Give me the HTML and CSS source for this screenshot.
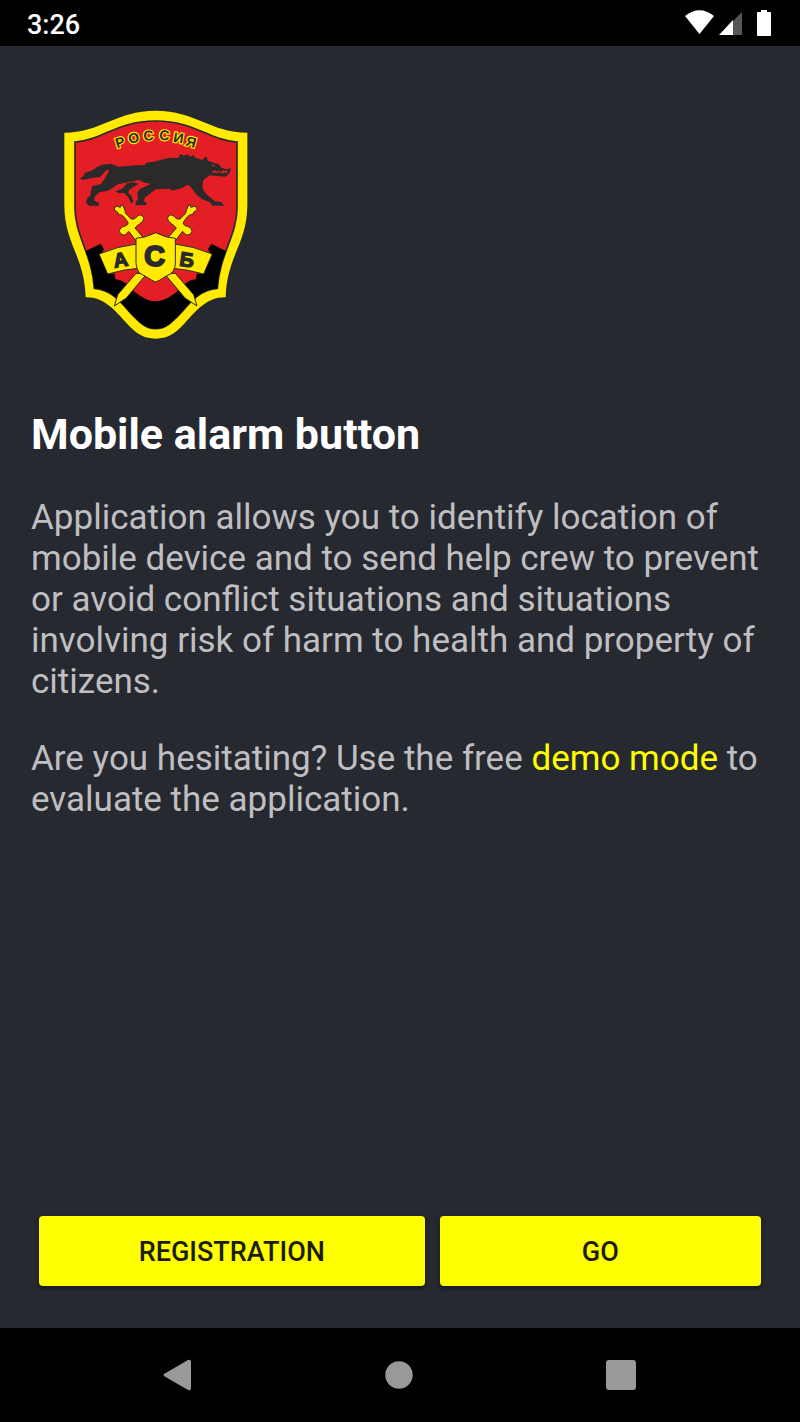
FILE: index.html
```
<!DOCTYPE html>
<html lang="en">
<head>
<meta charset="utf-8">
<meta name="viewport" content="width=device-width, initial-scale=1">
<title>Mobile alarm button</title>
<link rel="stylesheet" href="styles.css">
</head>
<body>
<div class="screen">
  <header class="status">
    <time class="clock">3:26</time>
    <svg class="status-icons" viewBox="0 0 90 32" aria-hidden="true">
      <path fill="#fff" d="M1 9Q15.500-2.500 30 9L15.500 27Z"/>
      <path fill="#55565a" d="M49 14L58 5V28H49Z"/>
      <path fill="#fff" d="M49 13V28H35Z"/>
      <path fill="#fff" d="M77 5V3h6V5h3q1 0 1 1V28q0 1-1 1H74q-1 0-1-1V6q0-1 1-1Z"/>
    </svg>
  </header>

  <main class="content">
    <svg class="emblem" viewBox="0 0 630 735" role="img" aria-label="АСБ Россия">
      <defs>
        <clipPath id="field"><path d="M75 126C160 120 200 63 317 63C434 63 475 120 561 126V325C561 405 508 465 502 565C455 568 425 600 396 635C365 668 347 686 317 686C287 686 269 668 238 635C209 600 179 568 133 565C127 465 75 405 75 325Z"/></clipPath>
        <path id="hilt" d="M192 328L198 318L211 322L217 312L225 331C224 341 233 346 244 357C259 360 261 343 273 345C290 354 277 367 263 376L255 384L292 427L273 443L238 396C232 390 233 406 220 405C201 399 208 382 222 379C235 376 237 369 230 361C222 351 216 341 205 344C205 334 200 336 192 328Z"/>
        <path id="blade" d="M258 520L203 584L193 618L229 594L290 522Z"/>
      </defs>
      <path fill="#ffea00" d="M43 98C150 98 200 32 317 32C434 32 484 98 592 98V315C592 430 530 470 527 592C473 590 440 630 404 670C375 703 350 716 317 716C284 716 259 703 230 670C194 630 161 590 107 592C104 470 43 430 43 315Z"/>
      <path fill="#e31e24" stroke="#2b2a29" stroke-width="5" d="M75 126C160 120 200 63 317 63C434 63 475 120 561 126V325C561 405 508 465 502 565C455 568 425 600 396 635C365 668 347 686 317 686C287 686 269 668 238 635C209 600 179 568 133 565C127 465 75 405 75 325Z"/>
      <path clip-path="url(#field)" d="M100 457L152 431L162 448L151 466L178 521H194L196 538C225 540 235 560 255 576C300 612 332 614 379 576C399 560 408 540 438 538L440 521H457L484 466L474 448L484 431L535 457V735H100Z"/>
      <text class="motto" x="201 238 281 327 368 405" y="145 131 122 119 125 136" rotate="-17 -11 -4 4 10 16">РОССИЯ</text>
      <path class="wolf" d="M89 235L104 226L102 220L129 210C142 200 154 190 184 192L206 200L260 196L283 195L290 188L318 184L342 177L360 173L385 174L391 161L402 167L412 163L422 170L429 165L438 174L456 180L469 169L474 182L486 187L507 193L513 203L531 208L543 204L541 213L536 221L530 228L525 230L493 227L479 226L461 240C452 262 462 280 480 291L493 303L515 307L522 317H487L480 307L457 298L441 286L420 258L411 255L397 264L365 272L361 266L339 267L317 268L299 282L286 291L281 303L290 309L288 316H257V306L264 298L261 279L270 267L303 251L283 248L267 240L240 245L204 253L174 272L148 277L135 289L132 301L147 309V317H116L108 307L112 294L120 287L126 259L153 252L165 235L178 211L169 210L151 231L125 234L100 240Z"/>
      <path class="wolf" d="M195 275L218 265L231 250L250 246L266 252L249 262L237 270L235 280L244 287L250 303L247 309L241 307L235 291L221 278L210 280Z"/>
      <path fill="#e31e24" d="M487 193l10 4-10 2ZM486 215L496 211L500 216L508 212L514 216L520 211L526 213L531 210L531 219L522 217L517 221L510 216L502 220L496 217L487 220Z"/>
      <g class="gold">
        <use href="#hilt"/><use href="#hilt" transform="matrix(-1 0 0 1 634 0)"/>
        <use href="#blade"/><use href="#blade" transform="matrix(-1 0 0 1 634 0)"/>
        <path d="M147 462Q205 438 260 432L272 504Q222 508 173 522Z"/>
        <path d="M487 462Q429 438 374 432L362 504Q412 508 461 522Z"/>
        <path d="M258 415Q285 414 317 398Q349 414 376 415V479C378 503 369 519 357 524C344 529 334 540 317 546C300 540 290 529 277 524C265 519 257 503 258 479Z"/>
      </g>
      <text class="letter" x="212" y="500" text-anchor="middle" transform="rotate(-9 212 480)">А</text>
      <text class="letter letter-main" x="314" y="497" text-anchor="middle">С</text>
      <text class="letter" x="411" y="500" text-anchor="middle" transform="rotate(9 411 480)">Б</text>
    </svg>

    <h1 class="title">Mobile alarm button</h1>
    <p class="copy">Application allows you to identify location of mobile device and to send help crew to prevent or avoid conflict situations and situations involving risk of harm to health and property of citizens.</p>
    <p class="copy">Are you hesitating? Use the free <a class="demo" href="#demo">demo mode</a> to evaluate the application.</p>

    <div class="actions">
      <button class="action" type="button">REGISTRATION</button>
      <button class="action" type="button">GO</button>
    </div>
  </main>

  <nav class="system-nav" aria-label="System">
    <button class="nav-button" type="button" aria-label="Back"><svg class="nav-icon" viewBox="0 0 32 32"><path d="M3 15L27 1Q30 0 30 3V29Q30 32 27 31L3 17Q2 16 3 15Z"/></svg></button>
    <button class="nav-button" type="button" aria-label="Home"><svg class="nav-icon" viewBox="0 0 32 32"><circle cx="16" cy="16" r="13.700"/></svg></button>
    <button class="nav-button" type="button" aria-label="Recent apps"><svg class="nav-icon" viewBox="0 0 32 32"><rect x="1" y="1" width="30" height="30" rx="3"/></svg></button>
  </nav>
</div>
</body>
</html>
```
FILE: styles.css
```
* {
  box-sizing: border-box;
}

body {
  margin: 0;
  background: #272930;
  color: #bfbfc1;
  font-family: Roboto, sans-serif;
}

.screen {
  display: flex;
  flex-direction: column;
  min-height: 100vh;
}

.status {
  display: flex;
  align-items: center;
  justify-content: space-between;
  height: 46px;
  padding: 0 26px 0 27px;
  background: #000;
}

.clock {
  padding-top: 4px;
  color: #fff;
  font-size: 27px;
  font-weight: 500;
  line-height: 32px;
}

.status-icons {
  width: 90px;
  height: 32px;
}

.content {
  flex: 1;
  display: flex;
  flex-direction: column;
  padding: 54px 31px 42px;
}

.emblem {
  width: 210px;
  height: 245px;
  margin: 0 0 64px 19px;
}

.title {
  margin: 0 0 38px;
  color: #fff;
  font-size: 43px;
  font-weight: 700;
  line-height: 50px;
}

.copy {
  margin: 0 0 36px;
  font-size: 35px;
  line-height: 41px;
}

.demo {
  color: #ff0;
  text-decoration: none;
}

.actions {
  display: grid;
  grid-template-columns: 6fr 5fr;
  gap: 15px;
  margin-top: auto;
  padding: 0 8px;
}

.action {
  height: 70px;
  padding: 2px 0 0;
  border: 0;
  border-radius: 4px;
  background: #ff0;
  box-shadow: 0 2px 5px rgba(0, 0, 0, 0.5);
  color: #1c1c04;
  font: 500 27px/32px Roboto, sans-serif;
}

.system-nav {
  display: grid;
  grid-template-columns: repeat(3, 1fr);
  height: 94px;
  padding: 0 68px 0 66px;
  background: #000;
}

.nav-button {
  display: grid;
  place-items: center;
  padding: 0;
  border: 0;
  background: none;
}

.nav-icon {
  width: 32px;
  height: 32px;
  fill: #999;
}

.wolf {
  fill: #2b2a29;
}

.gold {
  fill: #ffea00;
  stroke: #2b2a29;
  stroke-width: 3px;
  stroke-linejoin: round;
}

.motto {
  fill: #2b2a29;
  stroke: #ffea00;
  stroke-width: 7px;
  paint-order: stroke;
  font: 700 42px "Liberation Sans", sans-serif;
}

.letter {
  fill: #2b2a29;
  stroke: #2b2a29;
  stroke-width: 4px;
  font: 700 60px "Liberation Sans", sans-serif;
}

.letter-main {
  stroke-width: 6px;
  font-size: 86px;
}
```
